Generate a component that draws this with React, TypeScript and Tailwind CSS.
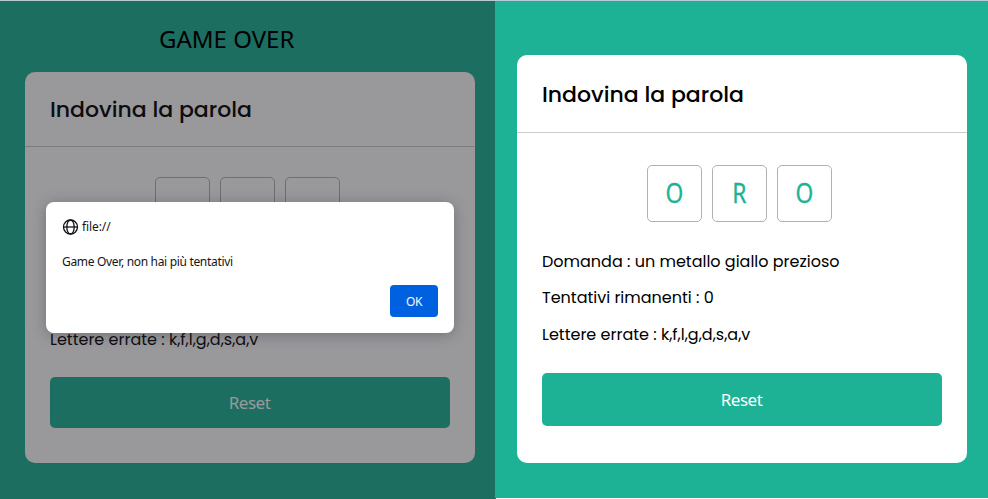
const geo = "font-[Poppins,Inter,sans-serif] [font-feature-settings:'cv11']";
const human = "font-['Noto_Sans',sans-serif]";

function Globe() {
  return (
    <svg width="17" height="16" viewBox="-0.5 0 17 16" fill="none" stroke="#15141a" strokeWidth="1.3">
      <circle cx="8" cy="8" r="7" />
      <ellipse cx="8" cy="8" rx="3.7" ry="7" />
      <path d="M1 8h14" />
    </svg>
  );
}

function Tiles({ letters, className }: { letters: string[]; className: string }) {
  return (
    <div className={`flex justify-center gap-[10px] pr-[5px] ${className}`}>
      {letters.map((letter, i) => (
        <div
          key={i}
          className={`flex h-[57px] w-[55px] items-center justify-center rounded-[5px] border border-[#b1b1b1] text-[26.5px] text-[#1db295] [-webkit-text-stroke:0.3px_#1db295] ${human}`}
        >
          <span className="inline-block scale-x-[0.86]">{letter}</span>
        </div>
      ))}
    </div>
  );
}

function Reset({ className }: { className: string }) {
  return (
    <button className={`block w-full rounded-[5px] bg-[#1db295] pr-px text-[17px] text-white ${human} ${className}`}>
      <span className="inline-block tracking-[-0.5px]">Reset</span>
    </button>
  );
}

function Alert() {
  return (
    <div className={`absolute top-[202px] left-[46px] h-[131px] w-[408px] rounded-[8px] bg-white px-4 pt-4 text-[#15141a] shadow-[0_2px_14px_rgba(58,57,68,0.4)] ${human}`}>
      <div className="flex h-[18px] items-center gap-[3px] text-[12px]">
        <Globe />
        <span className="tracking-[-0.1px]">file://</span>
      </div>
      <p className="mt-[17px] text-[12px] leading-[18px]">
        <span className="inline-block tracking-[-0.32px]">Game Over, non hai più tentativi</span>
      </p>
      <div className="mt-[14px] flex justify-end">
        <button className="h-8 w-12 rounded-[4px] bg-[#0061e0] pt-px text-[12px] tracking-[-0.3px] text-[#fbfbfe]">OK</button>
      </div>
    </div>
  );
}

export default function App() {
  return (
    <div className="relative flex h-[499px] w-[988px] overflow-hidden border-t border-[#b5cbd5] bg-white text-black">
      <section className="relative -mt-px h-[499px] w-[495px] shrink-0">
        <div className="h-full bg-[#1db295] px-[25px] pt-[72px]">
          <div className={`h-[391px] w-[450px] rounded-[10px] bg-white ${geo}`}>
            <h1 className="flex h-[75px] items-center border-b border-[#ccc] px-[25px] text-[22px] font-medium">
              Indovina la parola
            </h1>
            <div className="px-[25px]">
              <Tiles letters={["", "", ""]} className="pt-[30px]" />
              <p className="mt-[94px] h-6 text-[16px] leading-6">Lettere errate : k,f,l,g,d,s,a,v</p>
              <Reset className="mt-[25px] h-[51px]" />
            </div>
          </div>
        </div>
        <div className="absolute inset-0 bg-[rgba(28,27,34,0.45)]" />
        <div className={`absolute top-[23px] left-[159px] text-[24px] leading-8 ${human}`}>
          <span className="whitespace-nowrap">GAME OVER</span>
        </div>
        <div className="absolute inset-x-0 top-0 h-px bg-[#b5cbd5]" />
        <div className="absolute bottom-0 left-[495px] z-10 h-px w-px bg-[#1d6e5f]" />
        <Alert />
      </section>
      <section className="h-[497px] w-[493px] bg-[#1db295] pt-[54px] pl-[22px]">
        <div className={`h-[408px] w-[450px] rounded-[10px] bg-white ${geo}`}>
          <h1 className="flex h-[78px] items-center border-b border-[#ccc] px-[25px] pt-[2px] text-[22px] font-medium">
            Indovina la parola
          </h1>
          <div className="px-[25px]">
            <Tiles letters={["O", "R", "O"]} className="pt-8" />
            <div className="mt-[28px] text-[16px] leading-6">
              <p>Domanda : un metallo giallo prezioso</p>
              <p className="mt-3">Tentativi rimanenti : 0</p>
              <p className="mt-[13px]">Lettere errate : k,f,l,g,d,s,a,v</p>
            </div>
            <Reset className="mt-[26px] h-[53px]" />
          </div>
        </div>
      </section>
    </div>
  );
}
